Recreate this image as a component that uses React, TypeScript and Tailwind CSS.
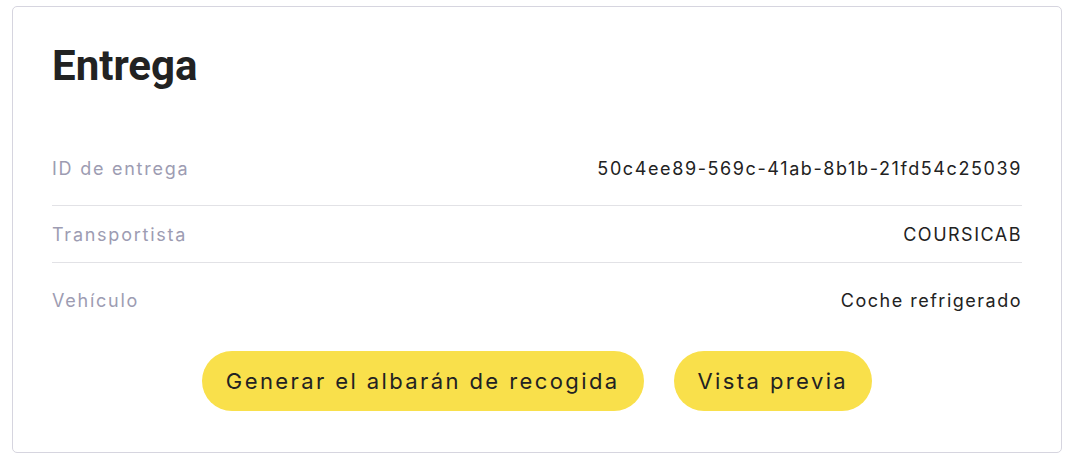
import React from "react";

export default function App() {
  return (
    <div className="w-[1072px] h-[464px] bg-white pt-[6px] pl-[12px]" style={{ fontFamily: "Inter, sans-serif" }}>
      <div className="w-[1050px] h-[447px] border border-[#d6d5df] rounded-[5px] px-[39px] pt-[35px]">
        <h1 className="text-[42px] leading-[48px] font-bold text-[#222222]" style={{ fontFamily: "Roboto, sans-serif" }}>
          Entrega
        </h1>
        <div className="mt-[67px] text-[18px] leading-[24px]">
          <div className="flex justify-between pb-[24px] border-b border-[#e2e2e6]">
            <span className="text-[#9d9cb2] tracking-[1.75px]">ID de entrega</span>
            <span className="text-[#222222] tracking-[1.6px]">50c4ee89-569c-41ab-8b1b-21fd54c25039</span>
          </div>
          <div className="flex justify-between pt-[17px] pb-[15px] border-b border-[#e2e2e6]">
            <span className="text-[#9d9cb2] tracking-[1.75px]">Transportista</span>
            <span className="text-[#222222] tracking-[1.5px]">COURSICAB</span>
          </div>
          <div className="flex justify-between pt-[26px]">
            <span className="text-[#9d9cb2] tracking-[1.75px]">Vehículo</span>
            <span className="text-[#222222] tracking-[1.5px]">Coche refrigerado</span>
          </div>
        </div>
        <div className="flex justify-center gap-[30px] mt-[38px] text-[22px] text-[#222222] tracking-[2.4px]">
          <button className="h-[60px] px-[24px] rounded-full bg-[#f9e04b]">
            Generar el albarán de recogida
          </button>
          <button className="h-[60px] px-[24px] rounded-full bg-[#f9e04b]">
            Vista previa
          </button>
        </div>
      </div>
    </div>
  );
}
